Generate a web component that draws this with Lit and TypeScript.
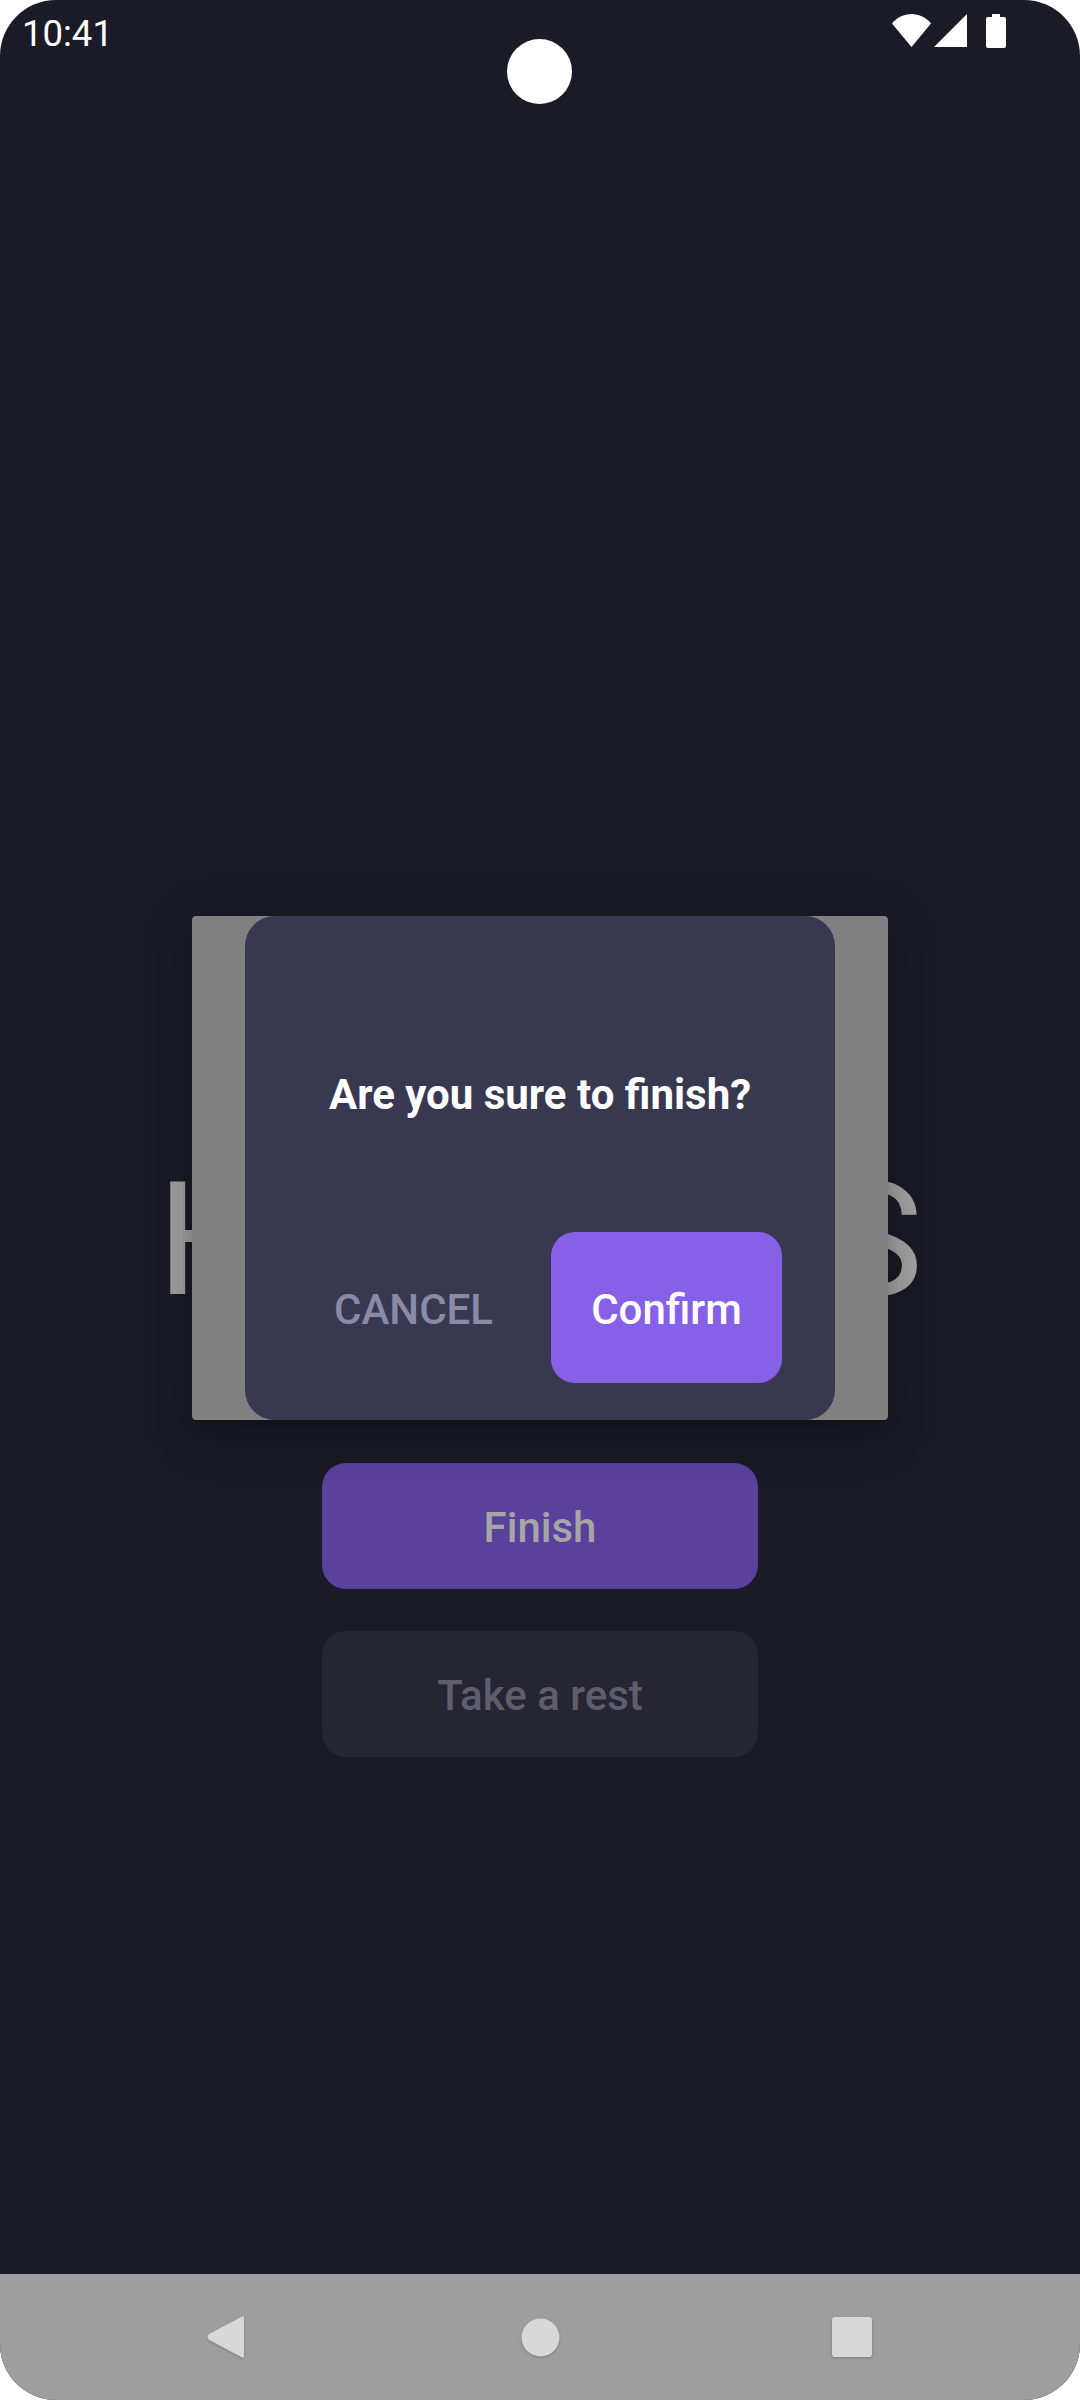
import { LitElement, html, css } from "lit";
import { customElement } from "lit/decorators.js";

@customElement("app-root")
export class AppRoot extends LitElement {
  static styles = css`
    :host { display: block; width: 1080px; height: 2400px; background: #fff; font-family: Roboto, "Liberation Sans", sans-serif; }
    .screen { position: relative; width: 1080px; height: 2400px; border-radius: 56px; overflow: hidden; background: #1b1b27; display: flex; flex-direction: column; }
    .status { height: 66px; flex: none; display: flex; align-items: flex-start; justify-content: space-between; padding: 12px 74px 0 22px; box-sizing: border-box; color: #fff; }
    .time { font-size: 36.500px; line-height: 44px; font-weight: 400; }
    .icons { display: flex; align-items: flex-start; padding-top: 2px; }
    .icons svg { display: block; }
    .wifi { margin-right: 3px; }
    .signal { margin-right: 19px; }
    .camera { position: absolute; left: 507px; top: 39px; width: 65px; height: 65px; border-radius: 50%; background: #fff; }
    .main { flex: 1; display: flex; flex-direction: column; align-items: center; padding-top: 1080px; }
    .clock { font-size: 158px; line-height: 188px; font-weight: 400; color: #a3a3a3; white-space: nowrap; margin-bottom: 129px; }
    .btn { width: 436px; height: 126px; box-sizing: border-box; padding-top: 2px; border-radius: 24px; display: flex; align-items: center; justify-content: center; font-size: 42px; font-weight: 500; }
    .finish { background: #5a419c; color: #a6a6a6; margin-bottom: 42px; }
    .rest { background: #262632; color: #5e5e6e; }
    .nav { height: 126px; flex: none; background: #9e9e9e; display: flex; align-items: center; padding: 0 0 0 207px; box-sizing: border-box; }
    .nav svg { display: block; flex: none; filter: drop-shadow(0 1px 1px rgba(0,0,0,.25)); }
    .back { margin-right: 277px; }
    .home { margin-right: 272px; }
    .overlay { position: absolute; left: 192px; top: 916px; width: 696px; height: 504px; border-radius: 4px; background: #808080; box-shadow: 0 24px 38px 3px rgba(0,0,0,.14), 0 9px 46px 8px rgba(0,0,0,.12), 0 11px 15px -7px rgba(0,0,0,.2); display: flex; justify-content: center; }
    .dialog { width: 590px; height: 504px; border-radius: 30px; background: #383850; display: flex; flex-direction: column; box-sizing: border-box; padding: 0 53px 37px 53px; }
    .title { flex: 1; display: flex; align-items: center; justify-content: center; font-size: 42px; font-weight: 700; color: #fff; padding-top: 40px; white-space: nowrap; }
    .actions { display: flex; align-items: center; justify-content: flex-end; }
    .cancel { font-size: 42px; font-weight: 500; color: #8a8aa8; margin-right: 58px; padding-top: 4px; }
    .confirm { width: 231px; height: 151px; box-sizing: border-box; padding-top: 4px; border-radius: 24px; background: #8661e8; color: #fff; font-size: 42px; font-weight: 500; display: flex; align-items: center; justify-content: center; }
  `;

  render() {
    return html`
      <div class="screen">
        <div class="status">
          <span class="time">10:41</span>
          <div class="icons">
            <svg class="wifi" width="39" height="33" viewBox="0 0 39 33"><path d="M0 9.500C5 3.500 12 0 19.500 0S34 3.500 39 9.500L19.500 33Z" fill="#fff"/></svg>
            <svg class="signal" width="33" height="33" viewBox="0 0 33 33"><path d="M33 0V33H0Z" fill="#fff"/></svg>
            <svg width="20" height="34" viewBox="0 0 20 34"><path d="M6 0H14V3H18Q20 3 20 5V32Q20 34 18 34H2Q0 34 0 32V5Q0 3 2 3H6Z" fill="#fff"/></svg>
          </div>
        </div>
        <div class="camera"></div>
        <div class="main">
          <div class="clock">HH:MM:SS</div>
          <div class="btn finish">Finish</div>
          <div class="btn rest">Take a rest</div>
        </div>
        <div class="nav">
          <svg class="back" width="37" height="42" viewBox="0 0 37 42"><path d="M35 .5Q37-.5 37 2V40Q37 42.500 35 41.500L2 24Q-1 21 2 18Z" fill="#d8d8d8"/></svg>
          <svg class="home" width="39" height="39" viewBox="0 0 39 39"><circle cx="19.500" cy="19.500" r="19" fill="#d8d8d8"/></svg>
          <svg width="40" height="40" viewBox="0 0 40 40"><rect width="40" height="40" rx="3" fill="#d8d8d8"/></svg>
        </div>
        <div class="overlay">
          <div class="dialog">
            <div class="title">Are you sure to finish?</div>
            <div class="actions">
              <span class="cancel">CANCEL</span>
              <div class="confirm">Confirm</div>
            </div>
          </div>
        </div>
      </div>
    `;
  }
}
